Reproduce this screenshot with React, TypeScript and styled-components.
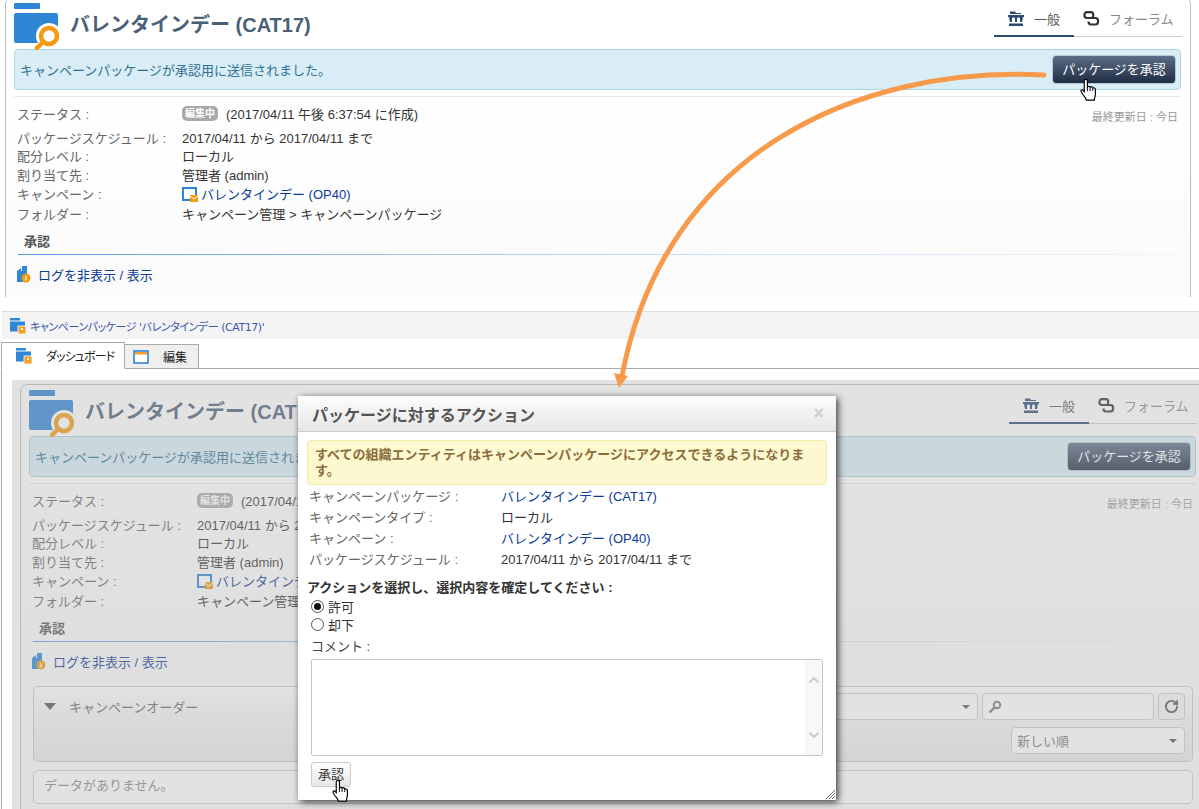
import React from 'react';
import styled, { createGlobalStyle } from 'styled-components';
import { ChevronUp, ChevronDown, RotateCw } from 'lucide-react';

const GlobalStyle = createGlobalStyle`
  html, body {
    margin: 0;
    padding: 0;
    background: #fff;
  }
  body {
    font-family: "Liberation Sans", "Noto Sans CJK JP", sans-serif;
    font-size: 13px;
    color: #333;
  }
  * {
    box-sizing: border-box;
  }
`;

const Page = styled.div`
  position: relative;
  width: 1199px;
  height: 809px;
  overflow: hidden;
`;

const TopClip = styled.div`
  height: 297px;
  padding-left: 5px;
  overflow: hidden;
`;

const Panel = styled.div`
  width: 1186px;
  margin-top: -3px;
  padding: 0 9px 20px 8px;
  border: 1px solid #bdbdbd;
  border-radius: 7px;
  background: linear-gradient(#fff 100px, #fafafa 300px);
`;

const Header = styled.div`
  height: 51px;
  padding-top: 5px;
  display: flex;
  justify-content: space-between;
`;

const TitleGroup = styled.div`
  display: flex;
  align-items: flex-start;
  gap: 11px;
`;

const Title = styled.h1`
  margin: 10px 0 0;
  font-size: 20px;
  line-height: 24px;
  font-weight: bold;
  color: #4a5f78;
`;

const TabBar = styled.div`
  display: flex;
  height: 34px;
  margin: 0 -1px 0 0;
  padding-top: 8px;
  border-bottom: 1px solid #ccc;
  width: 188px;
`;

const ViewTab = styled.div<{ $active?: boolean }>`
  display: flex;
  align-items: flex-start;
  gap: 9px;
  width: ${(p) => (p.$active ? '80px' : '108px')};
  height: 26px;
  padding-left: ${(p) => (p.$active ? '13px' : '9px')};
  line-height: 17px;
  color: ${(p) => (p.$active ? '#555' : '#888')};
  border-bottom: ${(p) => (p.$active ? '2px solid #2d4a72' : 'none')};
`;

const InfoBar = styled.div`
  display: flex;
  align-items: center;
  justify-content: space-between;
  height: 41px;
  padding: 0 4px 0 5px;
  background: #d9edf7;
  border: 1px solid #aed3e0;
  border-radius: 4px;
  color: #31708f;
`;

const ApproveButton = styled.div`
  width: 124px;
  height: 29px;
  line-height: 28px;
  text-align: center;
  color: #fff;
  border-radius: 4px;
  background: linear-gradient(#5d6d87, #1f2d43);
  border: 1px solid #b5c7d3;
`;

const Divider = styled.div`
  height: 1px;
  margin-top: 6px;
  background: #e9e9e9;
`;

const Details = styled.div`
  padding: 7px 0 0 3px;
`;

const DetailRow = styled.div<{ $tall?: boolean; $large?: boolean; $short?: boolean }>`
  display: flex;
  align-items: center;
  height: ${(p) => (p.$large ? '24px' : p.$tall ? '20px' : p.$short ? '18px' : '19px')};
  padding-bottom: ${(p) => (p.$large ? '5px' : '0')};
`;

const Label = styled.div`
  width: 165px;
  flex: none;
  color: #666;
  white-space: nowrap;
`;

const ValueLink = styled.a`
  display: inline-flex;
  align-items: center;
  gap: 3px;
  color: #0b3a98;
`;

const Badge = styled.span`
  width: 36px;
  height: 15px;
  margin-right: 8px;
  border-radius: 5px;
  background: #a9a9a9;
  color: #fff;
  font-size: 10px;
  font-weight: bold;
  line-height: 15px;
  text-align: center;
`;

const Updated = styled.span`
  margin-left: auto;
  margin-right: 3px;
  padding-top: 4px;
  font-size: 11px;
  color: #999;
`;

const SectionTitle = styled.div`
  margin: 10px 0 0 4px;
  height: 22px;
  padding: 0 0 0 6px;
  line-height: 18px;
  font-weight: bold;
  color: #555;
  border-bottom: 1px solid transparent;
  border-image: linear-gradient(to right, #5a9be2, #cfe2f6 60%, #eef5fc) 1;
`;

const LogRow = styled.a`
  display: flex;
  align-items: center;
  gap: 7px;
  margin: 11px 0 0 3px;
  height: 17px;
  color: #0b3a98;
`;

const OrderPanel = styled.div`
  height: 76px;
  margin: 16px 3px 0 4px;
  padding: 6px 7px 0 10px;
  border: 1px solid #c8c8c8;
  border-radius: 5px;
  background: linear-gradient(#fff, #f5f5f5 30%, #e9e9e9);
  display: flex;
  flex-direction: column;
  gap: 7px;
`;

const OrderRow = styled.div`
  display: flex;
  align-items: center;
  justify-content: flex-end;
  gap: 4px;
  height: 27px;
`;

const OrderTitle = styled.div`
  display: flex;
  align-items: center;
  gap: 13px;
  margin-right: auto;
  color: #666;
`;

const TriangleDown = styled.span<{ $small?: boolean }>`
  width: 0;
  height: 0;
  border-style: solid;
  border-color: #555 transparent transparent;
  border-width: ${(p) => (p.$small ? '4px 4px 0' : '7px 6px 0')};
`;

const Field = styled.div<{ $width: number }>`
  display: flex;
  align-items: center;
  justify-content: space-between;
  width: ${(p) => p.$width}px;
  height: 27px;
  padding: 0 7px 0 5px;
  background: #fff;
  border: 1px solid #ccc;
  border-radius: 4px;
  color: #777;
`;

const RefreshButton = styled.div`
  display: flex;
  align-items: center;
  justify-content: center;
  width: 27px;
  height: 27px;
  border: 1px solid #ccc;
  border-radius: 4px;
  background: #f5f5f5;
  color: #555;
`;

const EmptyBox = styled.div`
  height: 34px;
  margin: 8px 3px 0 4px;
  padding-left: 10px;
  line-height: 30px;
  color: #888;
  background: #fff;
  border: 1px solid #ccc;
  border-radius: 5px;
`;

const WindowTitle = styled.div`
  display: flex;
  align-items: center;
  gap: 4px;
  height: 28px;
  margin: 14px 0 0 2px;
  padding-left: 8px;
  background: #f4f4f4;
  border-top: 1px solid #ddd;
  font-family: "DejaVu Sans", "Noto Sans CJK JP", sans-serif;
  font-size: 11px;
  font-feature-settings: "palt";
  letter-spacing: -0.45px;
  color: #3a55ae;
  white-space: nowrap;
`;

const WindowTabs = styled.div`
  display: flex;
  align-items: flex-end;
  height: 29px;
  padding-left: 1px;
  font-size: 12px;
  font-family: "Noto Sans CJK JP", sans-serif;
`;

const WindowTab = styled.div<{ $active?: boolean }>`
  display: flex;
  align-items: center;
  width: ${(p) => (p.$active ? '124px' : '74px')};
  height: ${(p) => (p.$active ? '27px' : '25px')};
  padding-left: ${(p) => (p.$active ? '14px' : '8px')};
  gap: 14px;
  color: #222;
  font-feature-settings: "palt";
  letter-spacing: ${(p) => (p.$active ? '-0.9px' : '0')};
  background: ${(p) => (p.$active ? '#fff' : '#efefef')};
  border: 1px solid #aaa;
  border-bottom: ${(p) => (p.$active ? '1px solid #fff' : '1px solid #aaa')};
  border-left: ${(p) => (p.$active ? '1px solid #aaa' : 'none')};
  margin-bottom: -1px;
`;

const WindowBody = styled.div`
  height: 441px;
  margin-left: 1px;
  padding: 11px 0 0 10px;
  border-top: 1px solid #aaa;
  border-left: 1px solid #aaa;
`;

const Stage = styled.div`
  position: relative;
  height: 430px;
  padding: 7px 0 0 8px;
  overflow: hidden;
`;

const Dim = styled.div`
  position: absolute;
  inset: 0;
  background: rgba(177, 177, 177, 0.375);
`;

const Modal = styled.div`
  position: absolute;
  left: 286px;
  top: 16px;
  width: 538px;
  height: 404px;
  background: #fff;
  box-shadow: 2px 2px 7px rgba(0, 0, 0, 0.75);
`;

const ModalHead = styled.div`
  display: flex;
  align-items: center;
  justify-content: space-between;
  height: 36px;
  padding: 0 12px 0 14px;
  background: linear-gradient(#fdfdfd, #e6e6e6);
  border-bottom: 1px solid #ccc;
`;

const ModalTitle = styled.div`
  font-size: 16px;
  font-weight: bold;
  color: #555;
`;

const CloseMark = styled.span`
  font-size: 18px;
  font-weight: bold;
  color: #ccc;
`;

const ModalBody = styled.div`
  padding: 8px 9px 0;
`;

const Warning = styled.div`
  height: 45px;
  padding: 6px 9px 0 7px;
  line-height: 16px;
  font-weight: bold;
  color: #8a6d3b;
  background: #fcf8cf;
  border: 1px solid #f5e9a8;
  border-radius: 4px;
`;

const ModalRow = styled.div`
  display: flex;
  align-items: center;
  height: 21px;
  padding-left: 2px;
`;

const ModalLabel = styled(Label)`
  width: 192px;
`;

const Prompt = styled.div`
  margin-top: 10px;
  height: 18px;
  line-height: 18px;
  font-weight: bold;
  color: #333;
`;

const Form = styled.div`
  padding-left: 4px;
`;

const RadioRow = styled.div`
  display: flex;
  align-items: center;
  gap: 4px;
  height: 18px;
`;

const RadioMark = styled.span<{ $checked?: boolean }>`
  display: flex;
  align-items: center;
  justify-content: center;
  width: 13px;
  height: 13px;
  border: 1px solid #555;
  border-radius: 50%;
  background: #fff;

  &::after {
    content: "";
    display: ${(p) => (p.$checked ? 'block' : 'none')};
    width: 7px;
    height: 7px;
    border-radius: 50%;
    background: #111;
  }
`;

const CommentLabel = styled.div`
  margin-top: 5px;
  height: 18px;
  line-height: 18px;
  color: #444;
`;

const CommentBox = styled.div`
  display: flex;
  justify-content: flex-end;
  width: 512px;
  height: 97px;
  margin-top: 3px;
  border: 1px solid #c6c6c6;
  border-radius: 2px;
`;

const ScrollTrack = styled.div`
  display: flex;
  flex-direction: column;
  align-items: center;
  justify-content: space-between;
  width: 17px;
  padding: 12px 0;
  background: #f8f8f8;
  color: #ccc;
`;

const SubmitButton = styled.div`
  width: 40px;
  height: 25px;
  margin-top: 6px;
  line-height: 23px;
  text-align: center;
  color: #333;
  background: linear-gradient(#fff, #e6e6e6);
  border: 1px solid #ccc;
  border-radius: 3px;
`;

const Grip = styled.svg`
  position: absolute;
  right: 1px;
  bottom: 1px;
`;

const ArrowLayer = styled.svg`
  position: absolute;
  left: 0;
  top: 0;
  pointer-events: none;
`;

const CursorMark = styled.svg<{ $x: number; $y: number }>`
  position: absolute;
  left: ${(p) => p.$x}px;
  top: ${(p) => p.$y}px;
`;

function FolderSearchIcon() {
  return (
    <svg width="45" height="47" viewBox="1 0 45 47">
      <rect x="1" y="0" width="26" height="6" rx="1" fill="#2f86d4" />
      <rect x="1" y="10" width="44" height="30" rx="2" fill="#2f86d4" />
      <circle cx="36" cy="33" r="13" fill="#fff" />
      <path d="M24 45 L30 39" stroke="#f39a12" strokeWidth="4.5" strokeLinecap="round" />
      <circle cx="36" cy="33" r="8" fill="#fff" stroke="#f39a12" strokeWidth="4.5" />
    </svg>
  );
}

function GeneralIcon() {
  return (
    <svg width="18" height="16" viewBox="0 0 18 16">
      <path d="M3 0.5 H8 L9 2 H14 V3 H3 Z" fill="#2d4a72" />
      <path d="M1 4 H17 V6 H16 L15 11 H3 L2 6 H1 Z" fill="#2d4a72" />
      <path d="M5 7.5 C5 6 8 6 8 7.5 V12 H5 Z M10 7.5 C10 6 13 6 13 7.5 V12 H10 Z" fill="#fff" />
      <rect x="2" y="12.5" width="14" height="2.5" fill="#2d4a72" />
    </svg>
  );
}

function ForumIcon() {
  return (
    <svg width="17" height="16" viewBox="0 0 17 16" fill="none" stroke="#333" strokeWidth="2.2">
      <path d="M4 1.2 H8 C11 1.2 11 7 8 7 H4 C0.5 7 0.5 1.2 4 1.2 Z" />
      <path d="M7 7 H12.5 C16 7 16 13.5 12.5 13.5 H8 C6 13.5 5.5 12 5.5 10.5" />
    </svg>
  );
}

function CampaignIcon() {
  return (
    <svg width="16" height="16" viewBox="0 0 16 16">
      <rect x="1" y="2" width="13" height="12" fill="#fff" stroke="#2f86d4" strokeWidth="2" />
      <rect x="8" y="9" width="8" height="7" fill="#f39a12" />
      <path d="M8 10 L12 13 L16 10" fill="none" stroke="#fff" strokeWidth="1" />
    </svg>
  );
}

function LogIcon() {
  return (
    <svg width="14" height="17" viewBox="0 0 14 17">
      <path d="M0 5 L4 2 V5 H5 V0 H10 V16 H0 Z" fill="#2f86d4" />
      <circle cx="9" cy="12" r="4.5" fill="#f39a12" />
      <rect x="8.4" y="10" width="1.2" height="4.5" fill="#fff" />
    </svg>
  );
}

function SearchGlyph() {
  return (
    <svg width="14" height="14" viewBox="0 0 14 14" fill="none" stroke="#777">
      <circle cx="9" cy="5" r="3.2" strokeWidth="2" />
      <path d="M6.5 7.5 L1.5 12.5" strokeWidth="2.4" />
    </svg>
  );
}

function PackageFolderIcon() {
  return (
    <svg width="16" height="16" viewBox="0 0 16 16">
      <rect x="0" y="0" width="10" height="2.5" fill="#2f86d4" />
      <rect x="0" y="3.5" width="15" height="10" fill="#2f86d4" />
      <rect x="8" y="8" width="8" height="8" fill="#f3a02c" stroke="#fff" strokeWidth="0.8" />
      <rect x="11" y="10" width="2" height="2" fill="#fff" />
    </svg>
  );
}

function EditTabIcon() {
  return (
    <svg width="16" height="14" viewBox="0 0 16 14">
      <rect x="1" y="1" width="14" height="12" fill="#fff" stroke="#2f86d4" strokeWidth="1.6" />
      <rect x="2" y="2" width="12" height="2.5" fill="#f3a02c" />
    </svg>
  );
}

function HandCursor({ x, y }: { x: number; y: number }) {
  return (
    <CursorMark $x={x} $y={y} width="17" height="24" viewBox="0 0 16 22">
      <path
        d="M5.5 1 C6.3 1 7 1.6 7 2.5 V8 C7.5 7.5 9 7.4 9.5 8.2 C10.3 7.8 11.5 8 12 9 C12.8 8.7 14.5 9 14.5 10.5 V15 C14.5 17 13.5 18 13.5 20.5 H6 C5.5 18 4 17 2.5 15 L1 12.5 C.6 11.5 1.5 10.5 2.6 11 L4 12.5 V2.5 C4 1.6 4.7 1 5.5 1 Z"
        fill="#fff"
        stroke="#000"
        strokeWidth="1.1"
      />
      <path d="M7 8 V12 M9.5 8.2 V12 M12 9 V12" stroke="#000" strokeWidth="0.9" fill="none" />
    </CursorMark>
  );
}

function Dashboard() {
  return (
    <Panel>
      <Header>
        <TitleGroup>
          <FolderSearchIcon />
          <Title>バレンタインデー (CAT17)</Title>
        </TitleGroup>
        <TabBar>
          <ViewTab $active>
            <GeneralIcon />
            一般
          </ViewTab>
          <ViewTab>
            <ForumIcon />
            フォーラム
          </ViewTab>
        </TabBar>
      </Header>
      <InfoBar>
        キャンペーンパッケージが承認用に送信されました。
        <ApproveButton>パッケージを承認</ApproveButton>
      </InfoBar>
      <Divider />
      <Details>
        <DetailRow $large>
          <Label>ステータス :</Label>
          <Badge>編集中</Badge>
          (2017/04/11 午後 6:37:54 に作成)
          <Updated>最終更新日 : 今日</Updated>
        </DetailRow>
        <DetailRow $short>
          <Label>パッケージスケジュール :</Label>
          2017/04/11 から 2017/04/11 まで
        </DetailRow>
        <DetailRow>
          <Label>配分レベル :</Label>
          ローカル
        </DetailRow>
        <DetailRow>
          <Label>割り当て先 :</Label>
          管理者 (admin)
        </DetailRow>
        <DetailRow>
          <Label>キャンペーン :</Label>
          <ValueLink>
            <CampaignIcon />
            バレンタインデー (OP40)
          </ValueLink>
        </DetailRow>
        <DetailRow $tall>
          <Label>フォルダー :</Label>
          キャンペーン管理 &gt; キャンペーンパッケージ
        </DetailRow>
      </Details>
      <SectionTitle>承認</SectionTitle>
      <LogRow>
        <LogIcon />
        ログを非表示 / 表示
      </LogRow>
      <OrderPanel>
        <OrderRow>
          <OrderTitle>
            <TriangleDown />
            キャンペーンオーダー
          </OrderTitle>
          <Field $width={270}>
            <span />
            <TriangleDown $small />
          </Field>
          <Field $width={172}>
            <SearchGlyph />
          </Field>
          <RefreshButton>
            <RotateCw size={15} strokeWidth={3} />
          </RefreshButton>
        </OrderRow>
        <OrderRow>
          <Field $width={174}>
            新しい順
            <TriangleDown $small />
          </Field>
        </OrderRow>
      </OrderPanel>
      <EmptyBox>データがありません。</EmptyBox>
    </Panel>
  );
}

export default function App() {
  return (
    <Page>
      <GlobalStyle />
      <TopClip>
        <Dashboard />
      </TopClip>
      <WindowTitle>
        <PackageFolderIcon />
        キャンペーンパッケージ 'バレンタインデー (CAT17)'
      </WindowTitle>
      <WindowTabs>
        <WindowTab $active>
          <PackageFolderIcon />
          ダッシュボード
        </WindowTab>
        <WindowTab>
          <EditTabIcon />
          編集
        </WindowTab>
      </WindowTabs>
      <WindowBody>
        <Stage>
          <Dashboard />
          <Dim />
          <Modal>
            <ModalHead>
              <ModalTitle>パッケージに対するアクション</ModalTitle>
              <CloseMark>×</CloseMark>
            </ModalHead>
            <ModalBody>
              <Warning>すべての組織エンティティはキャンペーンパッケージにアクセスできるようになります。</Warning>
              <ModalRow>
                <ModalLabel>キャンペーンパッケージ :</ModalLabel>
                <ValueLink>バレンタインデー (CAT17)</ValueLink>
              </ModalRow>
              <ModalRow>
                <ModalLabel>キャンペーンタイプ :</ModalLabel>
                ローカル
              </ModalRow>
              <ModalRow>
                <ModalLabel>キャンペーン :</ModalLabel>
                <ValueLink>バレンタインデー (OP40)</ValueLink>
              </ModalRow>
              <ModalRow>
                <ModalLabel>パッケージスケジュール :</ModalLabel>
                2017/04/11 から 2017/04/11 まで
              </ModalRow>
              <Prompt>アクションを選択し、選択内容を確定してください :</Prompt>
              <Form>
                <RadioRow>
                  <RadioMark $checked />
                  許可
                </RadioRow>
                <RadioRow>
                  <RadioMark />
                  却下
                </RadioRow>
                <CommentLabel>コメント :</CommentLabel>
                <CommentBox>
                  <ScrollTrack>
                    <ChevronUp size={16} strokeWidth={3} />
                    <ChevronDown size={16} strokeWidth={3} />
                  </ScrollTrack>
                </CommentBox>
                <SubmitButton>承認</SubmitButton>
              </Form>
            </ModalBody>
            <Grip width="9" height="9" viewBox="0 0 9 9" stroke="#666" strokeWidth="1">
              <path d="M0 9 L9 0 M3 9 L9 3 M6 9 L9 6" />
            </Grip>
          </Modal>
        </Stage>
      </WindowBody>
      <ArrowLayer width="1199" height="809" viewBox="0 0 1199 809">
        <path
          d="M1044 75 C 860 66, 665 150, 622 376"
          fill="none"
          stroke="#f79a4b"
          strokeWidth="5"
          strokeLinecap="round"
        />
        <path d="M614 373 L628 376 L619 388 Z" fill="#f79a4b" />
      </ArrowLayer>
      <HandCursor x={1080} y={78} />
      <HandCursor x={332} y={779} />
    </Page>
  );
}
